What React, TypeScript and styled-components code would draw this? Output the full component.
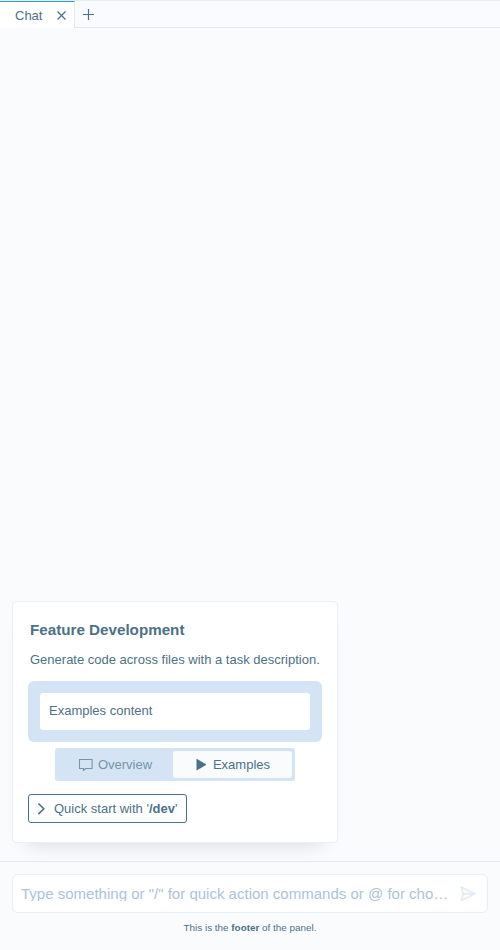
import React from "react";
import styled, { createGlobalStyle } from "styled-components";

const Global = createGlobalStyle`
  * { box-sizing: border-box; }
  body { margin: 0; background: #fafbfd; }
`;
const ink = "#4d7188";

const Panel = styled.div`
  display: flex;
  flex-direction: column;
  height: 950px;
  width: 500px;
  overflow: hidden;
  background: #fafbfd;
  color: ${ink};
  font: 13px/19px "Liberation Sans", Arial, sans-serif;
`;
const TabBar = styled.div`
  display: flex;
  flex: none;
  height: 28px;
  border-top: 1px solid #e8ecf0;
`;
const Tab = styled.div`
  display: flex;
  align-items: center;
  width: 75px;
  padding: 1px 8px 0 15px;
  justify-content: space-between;
  background: #fff;
  border-top: 1px solid #2f9bc9;
  border-right: 1px solid #e3e9ee;
`;
const TabRest = styled.div`
  flex: 1;
  padding: 8px 0 0 8px;
  border-bottom: 1px solid #e3e9ee;
  line-height: 0;
`;
const Messages = styled.main`
  display: flex;
  flex: 1;
  flex-direction: column;
  justify-content: flex-end;
  align-items: flex-start;
  padding: 0 12px 18px;
`;
const Card = styled.section`
  display: flex;
  flex-direction: column;
  align-items: flex-start;
  width: 326px;
  height: 242px;
  padding: 18px 15px 0;
  background: #fff;
  border: 1px solid #e8eff5;
  border-radius: 5px;
  box-shadow: 0 15px 20px -15px rgba(0, 0, 0, 0.15);
`;
const Title = styled.h1`
  margin: 0 2px;
  font-size: 15.2px;
  line-height: 20px;
  font-weight: bold;
`;
const Description = styled.p`
  margin: 10px 2px 12px;
  white-space: nowrap;
`;
const Example = styled.div`
  width: 294px;
  padding: 12px;
  background: #d5e4f5;
  border-radius: 6px;
`;
const ExampleBody = styled.div`
  height: 37px;
  padding: 8px 9px;
  background: #fff;
  border-radius: 3px;
`;
const Toggle = styled.div`
  display: flex;
  align-self: center;
  width: 240px;
  height: 33px;
  margin: 6px 0 13px;
  padding: 3px;
  background: #d5e4f5;
  border-radius: 3px;
`;
const Option = styled.button<{ $active?: boolean }>`
  display: flex;
  align-items: center;
  justify-content: center;
  gap: ${(p) => (p.$active ? 6 : 5)}px;
  width: ${(p) => (p.$active ? 119 : 115)}px;
  padding: 0;
  border: 0;
  border-radius: 3px;
  font: inherit;
  color: ${(p) => (p.$active ? ink : "#7595a8")};
  background: ${(p) => (p.$active ? "#fafbfd" : "transparent")};
`;
const QuickStart = styled.button`
  display: flex;
  align-items: center;
  gap: 6px;
  width: 159px;
  height: 29px;
  padding: 0 5px;
  border: 1px solid ${ink};
  border-radius: 3px;
  background: #fff;
  font: inherit;
  color: ${ink};
  white-space: nowrap;
`;
const Composer = styled.footer`
  flex: none;
  height: 89px;
  padding: 12px 12px 0;
  border-top: 1px solid #e5e9ee;
`;
const Prompt = styled.div`
  display: flex;
  align-items: center;
  height: 39px;
  padding: 0 11px 0 8px;
  background: #fff;
  border: 1px solid #e8eff5;
  border-radius: 6px;
`;
const Placeholder = styled.div`
  flex: 1;
  height: 15px;
  overflow: hidden;
  color: #adc3d8;
  font-size: 15.03px;
  line-height: 15px;
  white-space: nowrap;
`;
const Note = styled.div`
  margin-top: 9px;
  text-align: center;
  font-size: 9.9px;
  line-height: 12px;
`;

export default function App() {
  return (
    <Panel>
      <Global />
      <TabBar>
        <Tab>
          <span>Chat</span>
          <svg width="9" height="9" viewBox="0 0 9 9" stroke={ink} strokeWidth="1.2"><path d="M.5.5l8 8M8.5.5l-8 8" /></svg>
        </Tab>
        <TabRest>
          <svg width="11" height="11" viewBox="0 0 11 11" stroke={ink} strokeWidth="1.2"><path d="M5.5 0v11M0 5.5h11" /></svg>
        </TabRest>
      </TabBar>
      <Messages>
        <Card>
          <Title>Feature Development</Title>
          <Description>Generate code across files with a task description.</Description>
          <Example><ExampleBody>Examples content</ExampleBody></Example>
          <Toggle>
            <Option>
              <svg width="14" height="13" viewBox="0 0 14 13" fill="none" stroke="#7595a8" strokeWidth="1.1"><path d="M.5 1.5h12.6v9H6.7L4.5 12.4v-1.9H.5z" /></svg>
              Overview
            </Option>
            <Option $active>
              <svg width="12" height="13" viewBox="0 0 12 13" fill={ink}><path d="M1.5 1v11.2h.6L11 7v-.7L2.1 1z" /></svg>
              Examples
            </Option>
          </Toggle>
          <QuickStart>
            <svg width="14" height="14" viewBox="0 0 14 14" fill="none" stroke={ink} strokeWidth="1.6"><path d="M4.4 1.5L9.8 6.8l-5.4 5.3" /></svg>
            <span>Quick start with '<b>/dev</b>'</span>
          </QuickStart>
        </Card>
      </Messages>
      <Composer>
        <Prompt>
          <Placeholder>Type something or "/" for quick action commands or @ for cho…</Placeholder>
          <svg width="16" height="16" viewBox="0 0 16 16" fill="none" stroke="#e4edf4" strokeWidth="1.9"><path d="M1.5 1.2L14.7 7.8l-13.2 6.7 1.6-6.7zM3.3 7.8h11" strokeLinejoin="round" /></svg>
        </Prompt>
        <Note>This is the <b>footer</b> of the panel.</Note>
      </Composer>
    </Panel>
  );
}
